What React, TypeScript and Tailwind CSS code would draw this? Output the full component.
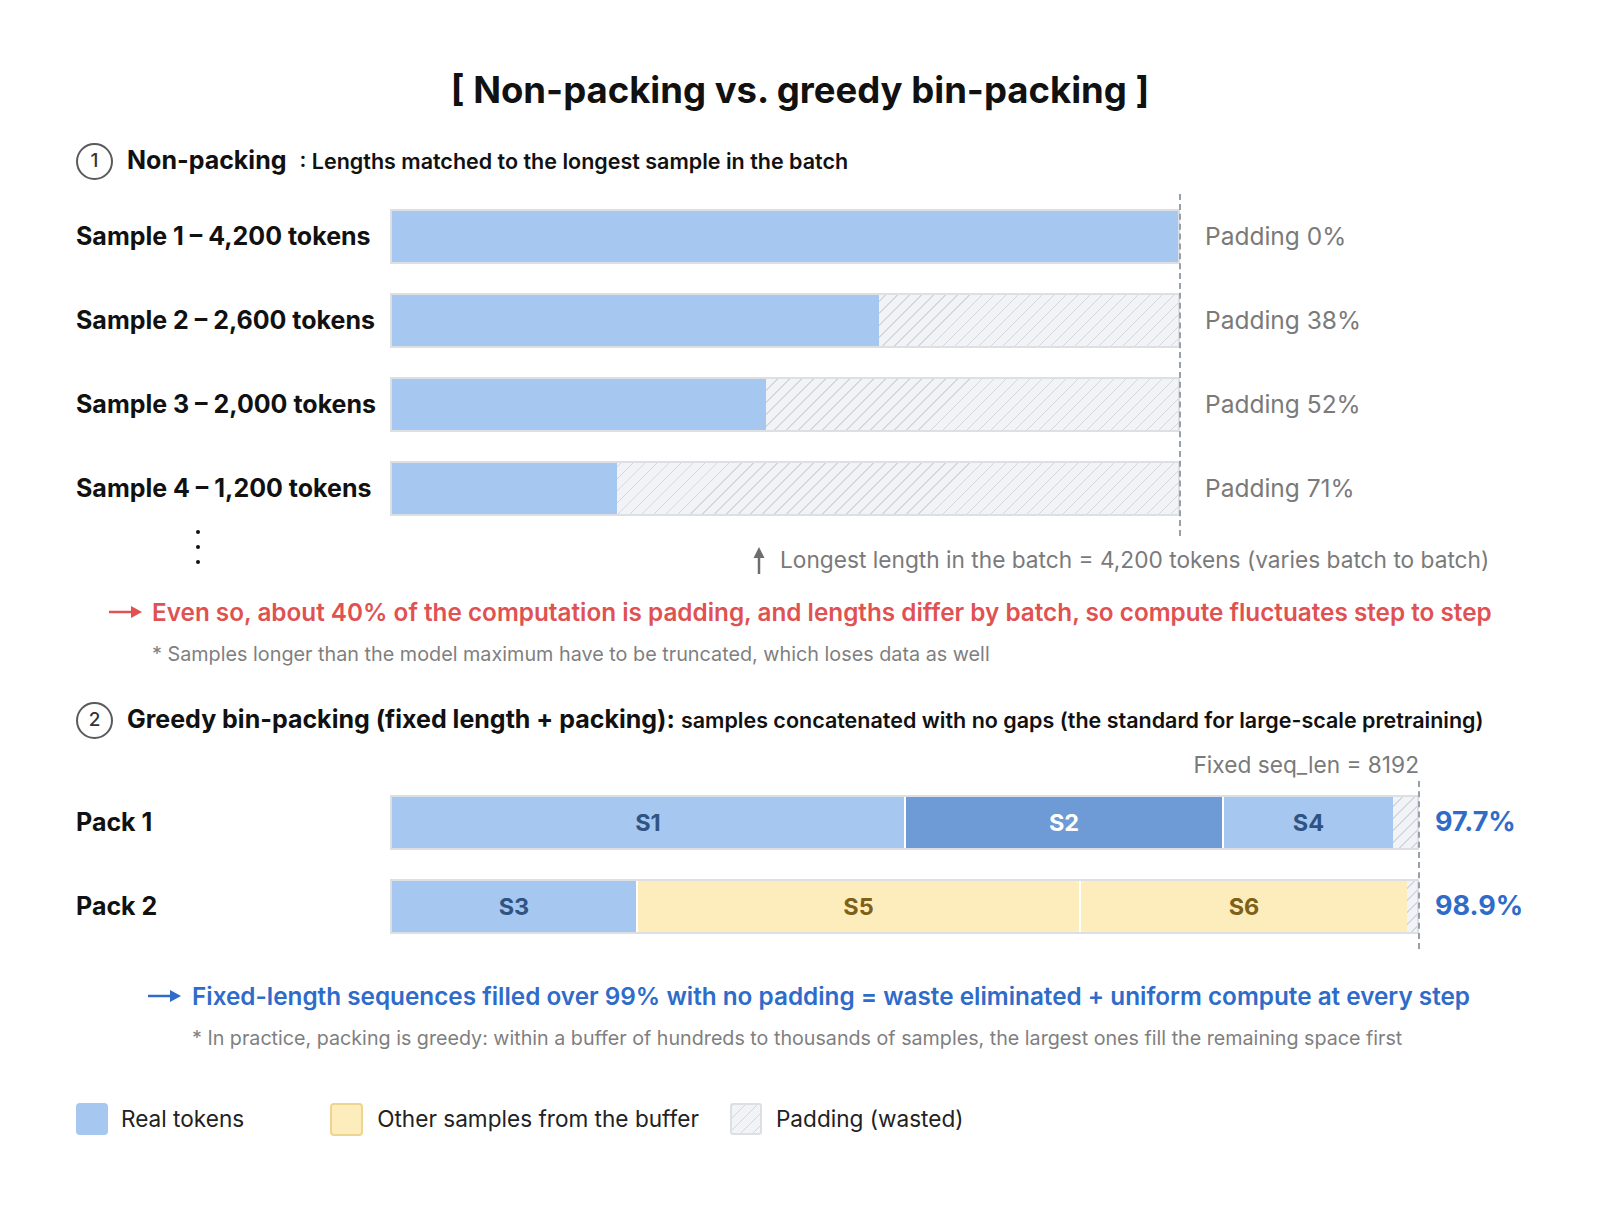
import React from "react";

const HATCH =
  "bg-[repeating-linear-gradient(135deg,#d2d6dd_0px,#d2d6dd_1px,#f1f3f6_1px,#f1f3f6_8.5px)]";

function Circle({ n }: { n: string }) {
  return (
    <div className="w-[37px] h-[37px] rounded-full border-2 border-[#5a5a5a] flex items-center justify-center text-[19px] font-medium text-[#333] shrink-0">
      {n}
    </div>
  );
}

function RightArrow({ color }: { color: string }) {
  return (
    <svg width="34" height="14" viewBox="0 0 34 14" className="shrink-0">
      <line x1="0" y1="7" x2="24" y2="7" stroke={color} strokeWidth="2.5" />
      <polygon points="22,1 33,7 22,13" fill={color} />
    </svg>
  );
}

const rows = [
  { label: "Sample 1 – 4,200 tokens", fill: 786, pad: "Padding 0%" },
  { label: "Sample 2 – 2,600 tokens", fill: 487, pad: "Padding 38%" },
  { label: "Sample 3 – 2,000 tokens", fill: 374, pad: "Padding 52%" },
  { label: "Sample 4 – 1,200 tokens", fill: 225, pad: "Padding 71%" },
];

export default function App() {
  return (
    <div className="w-[1600px] h-[1212px] bg-white font-['Inter',sans-serif] text-[#111]">
      {/* Title */}
      <div className="pt-[66px] h-[114px] flex items-start justify-center">
        <div className="h-[48px] flex items-center text-[36.5px] font-bold text-[#111]">
          [ Non-packing vs. greedy bin-packing ]
        </div>
      </div>

      <div className="pl-[76px]">
        {/* Section 1 header */}
        <div className="mt-[28px] h-[38px] flex items-center">
          <Circle n="1" />
          <span className="ml-[14px] text-[25px] font-bold">Non-packing</span>
          <span className="ml-[13px] text-[21.5px] font-semibold whitespace-nowrap">: Lengths matched to the longest sample in the batch</span>
        </div>

        {/* Rows */}
        <div className="relative mt-[29px]">
          <div className="absolute left-[1103px] top-[-15px] h-[342px] border-l-2 border-dashed border-[#9aa0a8]" />
          <div className="flex flex-col gap-[29px]">
            {rows.map((r) => (
              <div key={r.label} className="flex items-center h-[55px]">
                <div className="w-[314px] text-[25px] font-bold whitespace-nowrap">{r.label}</div>
                <div className={`w-[790px] h-[55px] border-2 border-[#dcdfe4] flex ${HATCH}`}>
                  <div className="h-full bg-[#a6c7ef]" style={{ width: r.fill }} />
                </div>
                <div className="ml-[25px] text-[24.5px] text-[#7a7a7a] whitespace-nowrap">{r.pad}</div>
              </div>
            ))}
          </div>
        </div>

        {/* dots + longest line */}
        <div className="flex h-[46px] mt-[12px]">
          <div className="ml-[120px] w-[4px] flex flex-col gap-[11px] mt-[2px]">
            <div className="w-[4px] h-[4px] rounded-full bg-[#111]" />
            <div className="w-[4px] h-[4px] rounded-full bg-[#111]" />
            <div className="w-[4px] h-[4px] rounded-full bg-[#111]" />
          </div>
          <div className="ml-[551px] self-end h-[28px] flex items-center">
            <svg width="16" height="27" viewBox="0 0 16 27" className="shrink-0">
              <line x1="8" y1="8" x2="8" y2="27" stroke="#6e6e6e" strokeWidth="2.5" />
              <polygon points="2.5,11 8,0 13.5,11" fill="#6e6e6e" />
            </svg>
            <span className="ml-[13px] text-[22.7px] text-[#7a7a7a] whitespace-nowrap">
              Longest length in the batch = 4,200 tokens (varies batch to batch)
            </span>
          </div>
        </div>

        {/* Red conclusion */}
        <div className="mt-[22px] h-[32px] flex items-center pl-[33px]">
          <RightArrow color="#e05252" />
          <span className="ml-[9px] text-[24.3px] font-semibold text-[#e05252] whitespace-nowrap">
            Even so, about 40% of the computation is padding, and lengths differ by batch, so compute fluctuates step to step
          </span>
        </div>
        <div className="mt-[14px] h-[26px] flex items-center pl-[76px] text-[19.8px] text-[#7f7f7f] whitespace-nowrap">
          * Samples longer than the model maximum have to be truncated, which loses data as well
        </div>

        {/* Section 2 header */}
        <div className="mt-[33px] h-[38px] flex items-center">
          <Circle n="2" />
          <span className="ml-[14px] text-[25px] font-bold whitespace-nowrap">Greedy bin-packing (fixed length + packing):</span>
          <span className="ml-[6px] text-[21.5px] font-semibold whitespace-nowrap">samples concatenated with no gaps (the standard for large-scale pretraining)</span>
        </div>

        <div className="mt-[12px] h-[28px] w-[1343px] flex items-center justify-end text-[22.7px] text-[#7a7a7a] whitespace-nowrap">
          Fixed seq_len = 8192
        </div>

        {/* Packs */}
        <div className="relative mt-[16px]">
          <div className="absolute left-[1342px] top-[-14px] h-[168px] border-l-2 border-dashed border-[#9aa0a8]" />
          <div className="flex flex-col gap-[29px]">
            <div className="flex items-center h-[55px]">
              <div className="w-[314px] text-[25px] font-bold">Pack 1</div>
              <div className={`w-[1029px] h-[55px] border-2 border-[#dcdfe4] flex ${HATCH}`}>
                <div className="w-[512px] h-full bg-[#a6c7ef] flex items-center justify-center text-[23.5px] font-bold text-[#2f5383]">S1</div>
                <div className="w-[318px] h-full bg-[#6e9bd6] border-l-2 border-white flex items-center justify-center text-[23.5px] font-bold text-white">S2</div>
                <div className="w-[171px] h-full bg-[#a6c7ef] border-l-2 border-white flex items-center justify-center text-[23.5px] font-bold text-[#2f5383]">S4</div>
              </div>
              <div className="ml-[16px] text-[27px] font-bold text-[#2f6cc9]">97.7%</div>
            </div>
            <div className="flex items-center h-[55px]">
              <div className="w-[314px] text-[25px] font-bold">Pack 2</div>
              <div className={`w-[1029px] h-[55px] border-2 border-[#dcdfe4] flex ${HATCH}`}>
                <div className="w-[244px] h-full bg-[#a6c7ef] flex items-center justify-center text-[23.5px] font-bold text-[#2f5383]">S3</div>
                <div className="w-[443px] h-full bg-[#fdedbd] border-l-2 border-white flex items-center justify-center text-[23.5px] font-bold text-[#7d6119]">S5</div>
                <div className="w-[328px] h-full bg-[#fdedbd] border-l-2 border-white flex items-center justify-center text-[23.5px] font-bold text-[#7d6119]">S6</div>
              </div>
              <div className="ml-[16px] text-[27px] font-bold text-[#2f6cc9]">98.9%</div>
            </div>
          </div>
        </div>

        {/* Blue conclusion */}
        <div className="mt-[46px] h-[32px] flex items-center pl-[72px]">
          <RightArrow color="#2f6cc9" />
          <span className="ml-[10px] text-[24.3px] font-semibold text-[#2f6cc9] whitespace-nowrap">
            Fixed-length sequences filled over 99% with no padding = waste eliminated + uniform compute at every step
          </span>
        </div>
        <div className="mt-[14px] h-[26px] flex items-center pl-[116px] text-[19.7px] text-[#7f7f7f] whitespace-nowrap">
          * In practice, packing is greedy: within a buffer of hundreds to thousands of samples, the largest ones fill the remaining space first
        </div>

        {/* Legend */}
        <div className="mt-[51px] h-[32px] flex items-center">
          <div className="w-[32px] h-[32px] rounded-[4px] bg-[#a6c7ef] shrink-0" />
          <span className="ml-[13px] text-[22.6px] text-[#222] whitespace-nowrap">Real tokens</span>
          <div className="ml-[86px] w-[33px] h-[33px] rounded-[4px] bg-[#fdedbd] border-2 border-[#edd48f] shrink-0" />
          <span className="ml-[14px] text-[22.6px] text-[#222] whitespace-nowrap">Other samples from the buffer</span>
          <div className={`ml-[31px] w-[32px] h-[32px] rounded-[3px] border-2 border-[#dcdfe4] shrink-0 ${HATCH}`} />
          <span className="ml-[14px] text-[22.6px] text-[#222] whitespace-nowrap">Padding (wasted)</span>
        </div>
      </div>
    </div>
  );
}
